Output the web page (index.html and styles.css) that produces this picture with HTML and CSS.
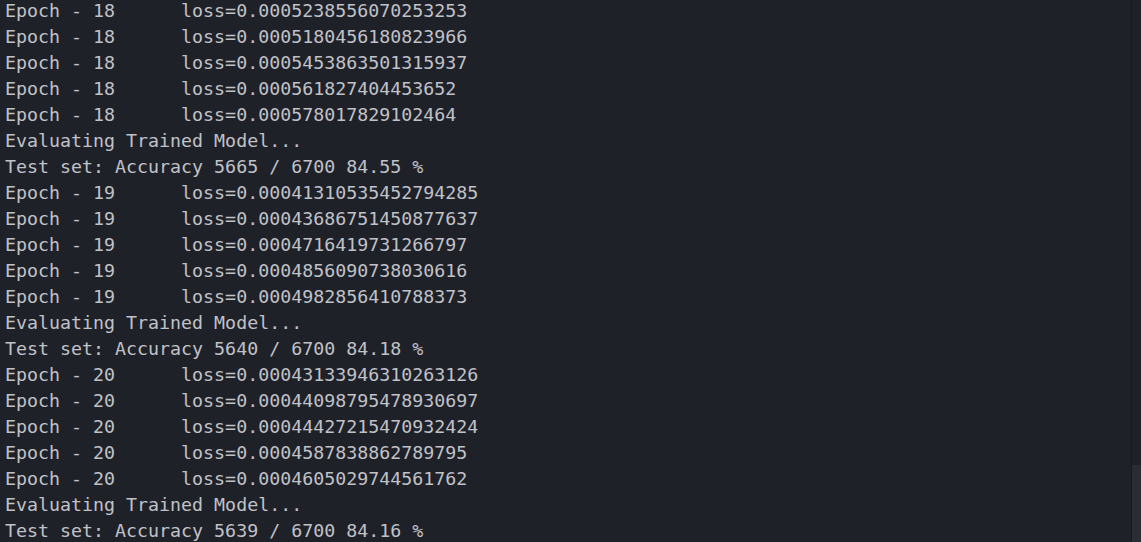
FILE: index.html
```html
<!DOCTYPE html>
<html>
<head>
<meta charset="utf-8">
<link rel="stylesheet" href="styles.css">
</head>
<body>
<div class="terminal">
<pre class="output">Epoch - 18      loss=0.0005238556070253253
Epoch - 18      loss=0.0005180456180823966
Epoch - 18      loss=0.0005453863501315937
Epoch - 18      loss=0.000561827404453652
Epoch - 18      loss=0.000578017829102464
Evaluating Trained Model...
Test set: Accuracy 5665 / 6700 84.55 %
Epoch - 19      loss=0.00041310535452794285
Epoch - 19      loss=0.00043686751450877637
Epoch - 19      loss=0.0004716419731266797
Epoch - 19      loss=0.0004856090738030616
Epoch - 19      loss=0.0004982856410788373
Evaluating Trained Model...
Test set: Accuracy 5640 / 6700 84.18 %
Epoch - 20      loss=0.00043133946310263126
Epoch - 20      loss=0.00044098795478930697
Epoch - 20      loss=0.00044427215470932424
Epoch - 20      loss=0.0004587838862789795
Epoch - 20      loss=0.0004605029744561762
Evaluating Trained Model...
Test set: Accuracy 5639 / 6700 84.16 %</pre>
<div class="scrollbar"><div class="thumb"></div></div>
</div>
</body>
</html>
```
FILE: styles.css
```css
html, body {
  margin: 0;
  padding: 0;
  background: #1f2128;
  overflow: hidden;
}
.terminal {
  position: relative;
  width: 1141px;
  height: 542px;
  overflow: hidden;
  background: #1f2128;
}
.output {
  margin: -2px 0 0 0;
  padding: 0 0 0 5px;
  font-family: "DejaVu Sans Mono", "Liberation Mono", monospace;
  font-size: 18.3px;
  line-height: 26px;
  color: #c0c2c8;
  white-space: pre;
}
.scrollbar {
  position: absolute;
  top: 0;
  right: 0;
  width: 9px;
  height: 542px;
  border-left: 1px solid #191a1f;
}
.thumb {
  position: absolute;
  top: 465px;
  left: 0;
  right: 0;
  bottom: 0;
  background: #2b2d35;
}
```
